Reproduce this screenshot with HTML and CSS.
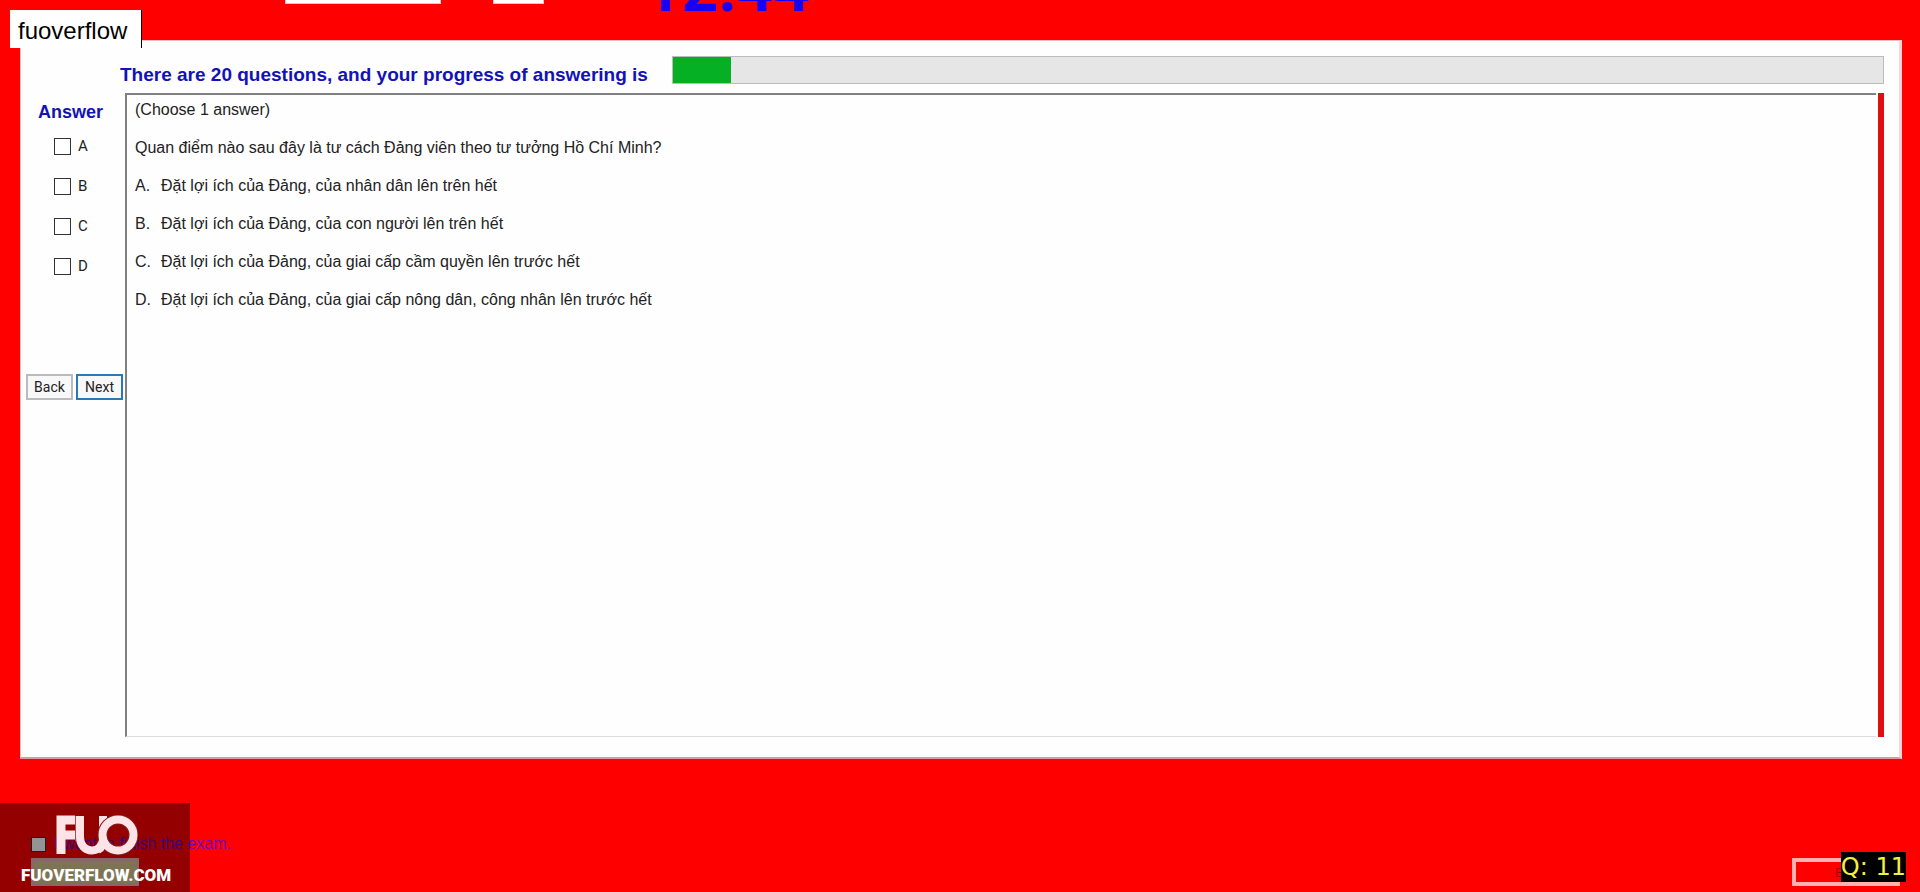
FILE: index.html
```html
<!DOCTYPE html>
<html lang="vi">
<head>
<meta charset="utf-8">
<title>Exam</title>
<link rel="stylesheet" href="styles.css">
</head>
<body>
<header class="topbar">
  <select class="top-select top-select-wide" aria-label="Font"><option></option></select>
  <select class="top-select top-select-small" aria-label="Size"><option></option></select>
  <div class="timer">12:44</div>
</header>
<div class="name-tag">fuoverflow</div>
<main class="panel">
  <div class="progress-row">
    <label class="heading heading-large" for="progress">There are 20 questions, and your progress of answering is</label>
    <progress class="progress" id="progress" value="48" max="1000"></progress>
  </div>
  <div class="work">
    <aside class="side">
      <fieldset class="answers">
        <legend class="heading answers-title">Answer</legend>
        <label class="choice"><input type="checkbox">A</label>
        <label class="choice"><input type="checkbox">B</label>
        <label class="choice"><input type="checkbox">C</label>
        <label class="choice"><input type="checkbox">D</label>
      </fieldset>
      <div class="nav">
        <button class="btn" type="button">Back</button>
        <button class="btn btn-next" type="button">Next</button>
      </div>
    </aside>
    <section class="question">
      <p>(Choose 1 answer)</p>
      <p>Quan điểm nào sau đây là tư cách Đảng viên theo tư tưởng Hồ Chí Minh?</p>
      <p class="option"><span>A.</span>Đặt lợi ích của Đảng, của nhân dân lên trên hết</p>
      <p class="option"><span>B.</span>Đặt lợi ích của Đảng, của con người lên trên hết</p>
      <p class="option"><span>C.</span>Đặt lợi ích của Đảng, của giai cấp cầm quyền lên trước hết</p>
      <p class="option"><span>D.</span>Đặt lợi ích của Đảng, của giai cấp nông dân, công nhân lên trước hết</p>
    </section>
    <div class="edge"></div>
  </div>
</main>
<footer class="footer">
  <div class="finish">
    <label class="finish-label"><input type="checkbox">I want to finish the exam.</label>
    <button class="finish-btn" type="button" aria-label="Finish"></button>
  </div>
  <button class="exit-btn" type="button">Exit</button>
</footer>
<div class="watermark">
  <svg class="logo" viewBox="0 0 82 40" role="img" aria-label="FUO">
    <g fill="none" stroke="#ffe3e6" stroke-width="8">
      <path d="M5 39V5H19M5 20H19" stroke-width="9"/>
      <path d="M24 1V22C24 30 29 35.500 36 35.500C43 35.500 47 30 47 20V1"/>
      <circle cx="62" cy="20" r="15.500" stroke="#7a2020" stroke-width="10"/>
      <circle cx="62" cy="20" r="15.500"/>
      <path d="M42 35C46 33 47.500 28 47 22"/>
      <path d="M19.500 1V26" stroke="#a05050" stroke-width="1"/>
    </g>
  </svg>
  <span class="site">FUOVERFLOW.COM</span>
</div>
<div class="counter">Q: 11</div>
</body>
</html>
```

FILE: styles.css
```css
* { box-sizing: border-box; }
body {
  margin: 0;
  min-height: 100vh;
  display: flex;
  flex-direction: column;
  background: #ff0000;
  color: #222;
  font-family: "Liberation Sans", sans-serif;
  font-size: 16px;
}
.topbar {
  height: 40px;
  display: flex;
  align-items: flex-start;
  padding-left: 285px;
  overflow: hidden;
}
.top-select {
  height: 24px;
  margin-top: -20px;
  border: 1px solid #ccc;
  border-radius: 0;
  background: #fff;
}
.top-select-wide { width: 156px; }
.top-select-small { width: 51px; margin-left: 52px; }
.timer {
  margin: -46px 0 0 101px;
  font: 700 64px/72px Roboto, sans-serif;
  color: #1a00f0;
}
.name-tag {
  position: absolute;
  left: 10px;
  top: 10px;
  padding: 5px 14px 1px 8px;
  border-right: 1px solid #000;
  background: #fff;
  color: #000;
  font: 24px/32px "Liberation Sans", sans-serif;
}
.panel {
  flex: 1;
  margin: 0 18px 0 20px;
  display: flex;
  flex-direction: column;
  padding: 15px 15px 20px 5px;
  border: 1px solid #f5c0c0;
  border-right: 3px solid #f5d5d8;
  border-bottom: 2px solid #d99;
  background: #fefefe;
}
.progress-row {
  display: flex;
  gap: 24px;
  padding-left: 94px;
  margin-bottom: 6px;
}
.heading {
  color: #1212b8;
  font: bold 18px/24px "Liberation Sans", sans-serif;
}
.heading-large { padding-top: 7px; font-size: 19px; }
.progress {
  flex: 1;
  height: 28px;
  appearance: none;
  border: 1px solid #bcbcbc;
}
.progress::-webkit-progress-bar { background: #e6e6e6; }
.progress::-webkit-progress-value { background: #06b025; }
.work { flex: 1; display: flex; }
.side { width: 99px; }
.answers {
  margin: 0;
  padding: 0 0 0 28px;
  border: 0;
}
.answers-title { padding: 7px 0 2px; margin-left: -16px; }
.choice {
  display: flex;
  align-items: center;
  gap: 7px;
  height: 40px;
  font: 15px/20px Roboto, sans-serif;
}
input[type="checkbox"] {
  appearance: none;
  width: 17px;
  height: 17px;
  margin: 0;
  border: 1px solid #333;
  background: #fff;
}
.nav { display: flex; gap: 3px; padding-top: 88px; }
.btn {
  width: 47px;
  height: 26px;
  padding: 0;
  border: 2px solid #bbb;
  background: #f8f8f8;
  color: #222;
  font: 14px/20px Roboto, sans-serif;
}
.btn-next { border-color: #2a78b8; }
.question {
  flex: 1;
  margin-right: 2px;
  padding: 3px 8px;
  border: 0 solid #808080;
  border-width: 2px 0 1px 2px;
  border-bottom-color: #ddd;
}
.question p { margin: 0 0 14px; line-height: 24px; }
.question .option { display: flex; }
.option span { width: 26px; }
.edge { width: 6px; background: #e01010; }
.footer {
  height: 133px;
  display: flex;
  justify-content: space-between;
  align-items: flex-end;
  padding: 0 20px 6px 31px;
}
.finish-label {
  display: flex;
  align-items: center;
  gap: 8px;
  color: #7000c0;
  line-height: 20px;
  margin-bottom: 4px;
}
.finish-label input[type="checkbox"] { width: 15px; height: 15px; }
.finish-btn {
  display: block;
  width: 108px;
  height: 28px;
  border: 3px solid #f0b0b0;
  background: #d8c890;
}
.exit-btn {
  width: 108px;
  height: 28px;
  border: 4px solid #ffb0b0;
  background: transparent;
  color: #a00;
}
.watermark {
  position: absolute;
  left: 0;
  bottom: 0;
  width: 190px;
  height: 89px;
  padding: 12px 0 0 21px;
  background: rgba(0, 0, 0, 0.42);
}
.logo { display: block; width: 82px; height: 40px; margin-left: 35px; }
.site {
  display: block;
  margin-top: 6px;
  color: #fff;
  font: 900 17px/28px Roboto, sans-serif;
}
.counter {
  position: absolute;
  right: 14px;
  bottom: 10px;
  background: #000;
  color: #f0f040;
  font: 24px/30px "DejaVu Sans", sans-serif;
}
```
